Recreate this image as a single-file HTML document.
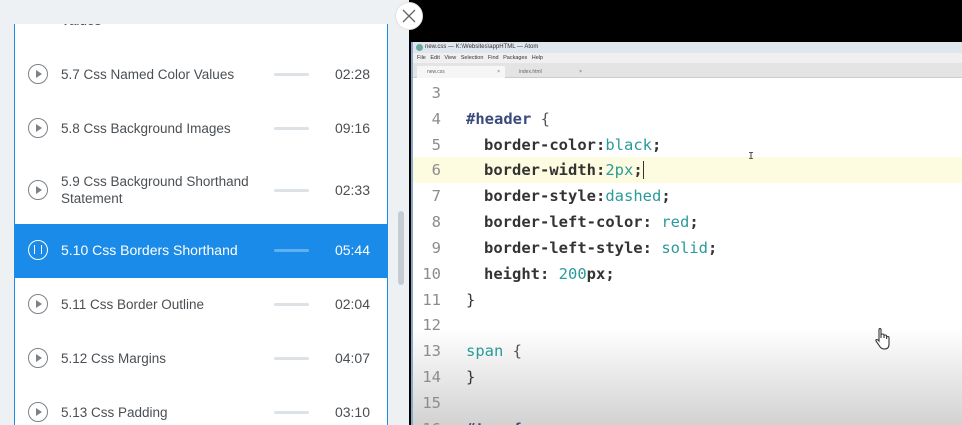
<!DOCTYPE html>
<html><head><meta charset="utf-8"><style>
*{margin:0;padding:0;box-sizing:border-box}
html,body{width:962px;height:425px;overflow:hidden}
body{background:#eef1f4;position:relative;font-family:"Liberation Sans",sans-serif}
.panel{position:absolute;left:14px;top:24px;width:374px;height:401px;background:#fff;border-left:1px solid #1a8be8;border-right:1px solid #1a8be8;overflow:hidden}
.row{position:absolute;left:0;width:372px;color:#4a4f54;font-size:13.5px}
.ic{position:absolute;left:13px;width:20px;height:20px;border:1.5px solid #7d8287;border-radius:50%}
.ic:after{content:"";position:absolute;left:7px;top:5px;border-left:6px solid #7d8287;border-top:4px solid transparent;border-bottom:4px solid transparent}
.t{position:absolute;left:46px;line-height:17px}
.bar{position:absolute;left:259px;width:35px;height:3px;background:#dde2e6;border-radius:2px}
.tm{position:absolute;right:17px;font-size:14px}
.sel{background:#1a8be8;color:#fff}
.sel .ic{border-color:#fff}
.sel .ic:after{content:"";left:5px;top:4px;width:6px;height:9px;border:none;border-left:1.5px solid #fff;border-right:1.5px solid #fff}
.sel .bar{background:#5fb0f0}
.video{position:absolute;left:409px;top:0;width:553px;height:425px;background:#000}
.win{position:absolute;left:411px;top:42px;width:551px;height:383px;background:#fff;border-left:2px solid #8aa9c9;overflow:hidden}
.title{height:11px;background:#dfe6ee;font-size:6px;color:#333;padding-left:12px;line-height:11px}
.menu{height:10px;background:#f0f0f0;font-size:5.5px;color:#333;padding-left:4px;line-height:10px;word-spacing:3px}
.tabs{height:15px;background:#e4e4e4;border-bottom:1px solid #ccc;position:relative}
.tab{position:absolute;top:3px;height:12px;font-size:5px;color:#666;line-height:12px;padding-left:10px}
.code{position:absolute;left:0;top:36px;width:551px;height:347px;background:linear-gradient(#fff 0,#fff 250px,#d2d2d2 347px);font-family:"DejaVu Sans Mono",monospace;font-size:15.5px}
.ln{position:absolute;left:0;width:28px;text-align:right;color:#8c8c8c;font-weight:normal}
.l{position:absolute;height:26px;line-height:26px;left:0;width:551px;white-space:pre}
.c{position:absolute;left:53px;color:#333;font-weight:bold}
.v{color:#2b9a9a;font-weight:normal}
.s{color:#3a4a7a}
</style></head><body>
<div class="panel">
 <div class="row" style="top:0;height:20px"><span class="t" style="top:-12px">Values</span></div>
 <div class="row" style="top:38px;height:24px"><div class="ic" style="top:2px"></div><span class="t" style="top:4px">5.7 Css Named Color Values</span><div class="bar" style="top:11px"></div><span class="tm" style="top:4px">02:28</span></div>
 <div class="row" style="top:92px;height:24px"><div class="ic" style="top:2px"></div><span class="t" style="top:4px">5.8 Css Background Images</span><div class="bar" style="top:11px"></div><span class="tm" style="top:4px">09:16</span></div>
 <div class="row" style="top:154px;height:24px"><div class="ic" style="top:2px"></div><span class="t" style="top:-5px">5.9 Css Background Shorthand<br>Statement</span><div class="bar" style="top:11px"></div><span class="tm" style="top:4px">02:33</span></div>
 <div class="row sel" style="top:200px;height:54px"><div class="ic" style="top:16px"></div><span class="t" style="top:18px;font-size:14px">5.10 Css Borders Shorthand</span><div class="bar" style="top:25px"></div><span class="tm" style="top:18px">05:44</span></div>
 <div class="row" style="top:268px;height:24px"><div class="ic" style="top:2px"></div><span class="t" style="top:4px">5.11 Css Border Outline</span><div class="bar" style="top:11px"></div><span class="tm" style="top:4px">02:04</span></div>
 <div class="row" style="top:322px;height:24px"><div class="ic" style="top:2px"></div><span class="t" style="top:4px">5.12 Css Margins</span><div class="bar" style="top:11px"></div><span class="tm" style="top:4px">04:07</span></div>
 <div class="row" style="top:376px;height:24px"><div class="ic" style="top:2px"></div><span class="t" style="top:4px">5.13 Css Padding</span><div class="bar" style="top:11px"></div><span class="tm" style="top:4px">03:10</span></div>
</div>
<div style="position:absolute;left:398px;top:211px;width:6px;height:74px;background:#c4ccd2;border-radius:3px"></div>
<div class="video"></div>
<div style="position:absolute;left:395px;top:2px;width:28px;height:28px;border-radius:50%;background:#fff;border:1px solid #e0e0e0">
 <svg width="26" height="26" viewBox="0 0 26 26"><path d="M7 7L19 19M19 7L7 19" stroke="#666" stroke-width="1.3"/></svg>
</div>
<div class="win">
 <div class="title"><span style="position:absolute;left:3px;top:2px;width:7px;height:7px;border-radius:50%;background:#6a9"></span>new.css — K:\Websites\appHTML — Atom</div>
 <div class="menu">File Edit View Selection Find Packages Help</div>
 <div class="tabs">
  <div class="tab" style="left:4px;width:88px;background:#f6f6f6">new.css<span style="position:absolute;right:5px">×</span></div>
  <div class="tab" style="left:96px;width:78px">index.html<span style="position:absolute;right:5px">×</span></div>
 </div>
 <div class="code">
  <div class="l" style="top:2px"><span class="ln">3</span></div>
  <div class="l" style="top:28px"><span class="ln">4</span><span class="c s">#header <span style="font-weight:normal;color:#555">{</span></span></div>
  <div class="l" style="top:54px"><span class="ln">5</span><span class="c" style="left:71px">border-color:<span class="v">black</span>;</span></div>
  <div class="l" style="top:79px;background:#fdfbe0"><span class="ln">6</span><span class="c" style="left:71px">border-width:<span class="v">2px</span>;<span style="border-left:1px solid #333"></span></span></div>
  <div class="l" style="top:105px"><span class="ln">7</span><span class="c" style="left:71px">border-style:<span class="v">dashed</span>;</span></div>
  <div class="l" style="top:131px"><span class="ln">8</span><span class="c" style="left:71px">border-left-color: <span class="v">red</span>;</span></div>
  <div class="l" style="top:157px"><span class="ln">9</span><span class="c" style="left:71px">border-left-style: <span class="v">solid</span>;</span></div>
  <div class="l" style="top:183px"><span class="ln">10</span><span class="c" style="left:71px">height: <span class="v">200</span>px;</span></div>
  <div class="l" style="top:209px"><span class="ln">11</span><span class="c" style="font-weight:normal">}</span></div>
  <div class="l" style="top:234px"><span class="ln">12</span></div>
  <div class="l" style="top:260px"><span class="ln">13</span><span class="c v">span <span style="color:#555">{</span></span></div>
  <div class="l" style="top:286px"><span class="ln">14</span><span class="c" style="font-weight:normal">}</span></div>
  <div class="l" style="top:312px"><span class="ln">15</span></div>
  <div class="l" style="top:338px"><span class="ln">16</span><span class="c s">#top {</span></div>
  <span style="position:absolute;left:335px;top:73px;font-size:10px;color:#444">I</span>
  <svg style="position:absolute;left:460px;top:250px" width="20" height="24" viewBox="0 0 20 24"><path d="M6 2Q6 0.5 7 0.5Q8 0.5 8 2V10V7Q8 6 9.5 6Q11 6 11 7V10V8Q11 7 12.3 7Q13.6 7 13.6 8V11V9.5Q13.6 8.5 14.8 8.5Q16 8.5 16 9.5V16Q16 21 11.5 21Q8 21 6.5 18L3 13Q2.5 11.5 3.8 11.5Q4.8 11.5 6 13Z" fill="#fff" stroke="#333" stroke-width="1.1"/></svg>
 </div>
</div>
</body></html>
